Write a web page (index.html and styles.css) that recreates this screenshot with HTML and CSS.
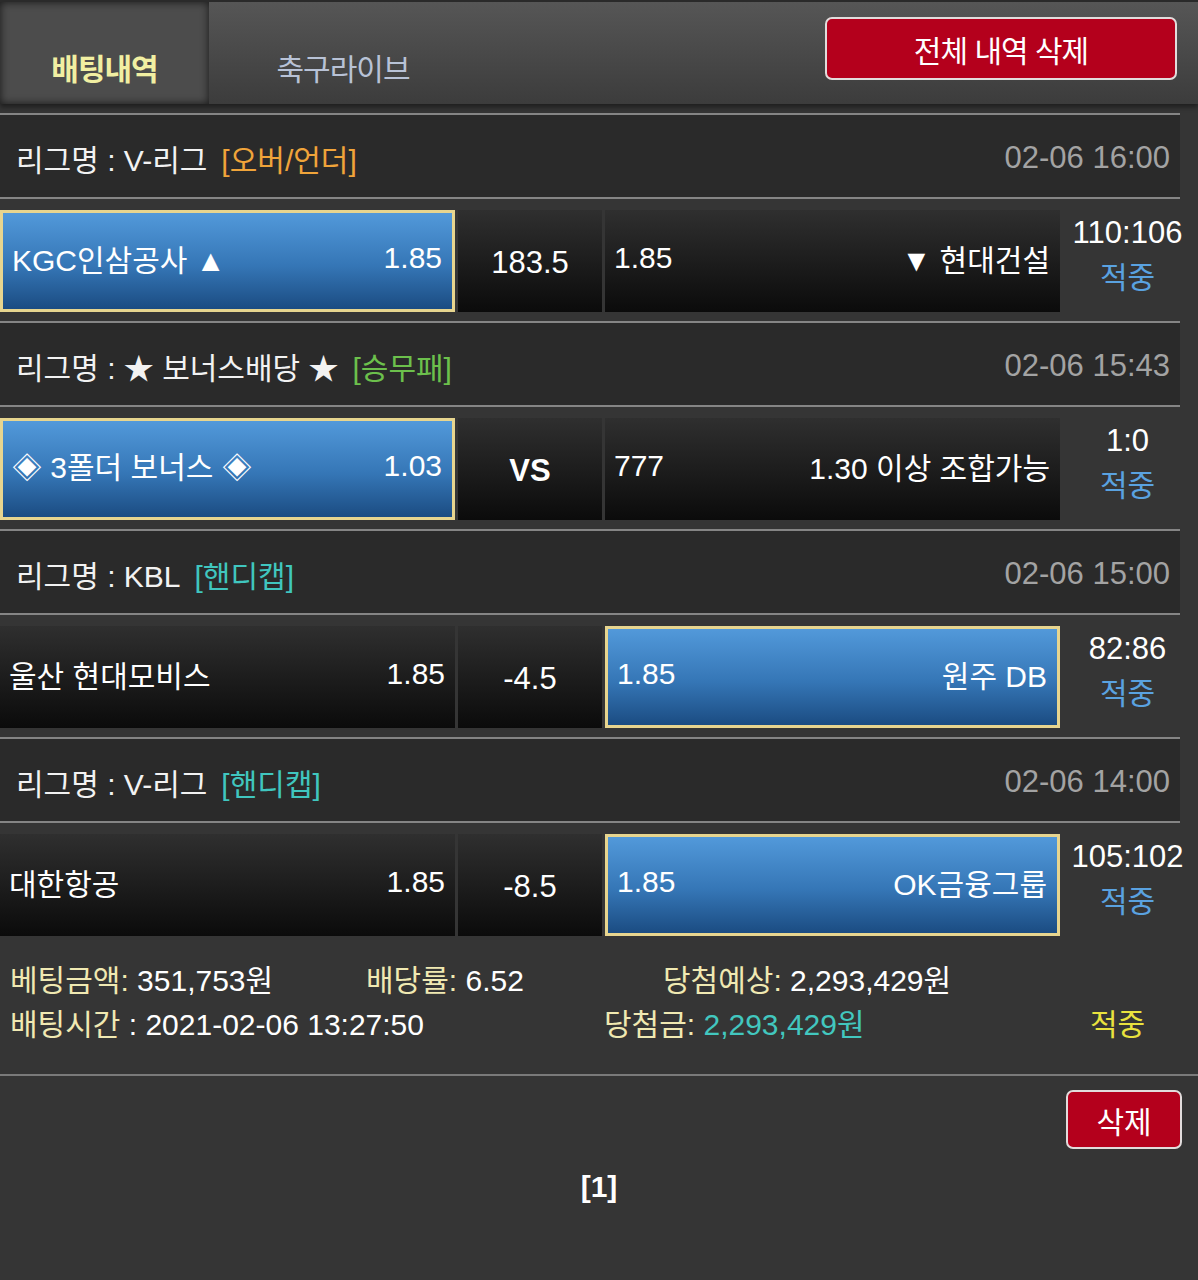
FILE: index.html
```html
<!DOCTYPE html>
<html lang="ko">
<head>
<meta charset="utf-8">
<title>배팅내역</title>
<link rel="stylesheet" href="styles.css">
</head>
<body>
<div class="page">
  <header class="topbar">
    <div class="tab active">배팅내역</div>
    <div class="tab">축구라이브</div>
    <button class="btn-red btn-all">전체 내역 삭제</button>
  </header>

  <main class="list">
    <section class="game">
      <div class="league"><span class="lname">리그명 : V-리그</span><span class="tag orange">[오버/언더]</span><span class="time">02-06 16:00</span></div>
      <div class="match">
        <div class="cell side sel"><span>KGC인삼공사 ▲</span><span>1.85</span></div>
        <div class="cell mid">183.5</div>
        <div class="cell side"><span>1.85</span><span>▼ 현대건설</span></div>
        <div class="score"><div>110:106</div><div class="hit">적중</div></div>
      </div>
    </section>

    <section class="game">
      <div class="league"><span class="lname">리그명 : ★ 보너스배당 ★</span><span class="tag green">[승무패]</span><span class="time">02-06 15:43</span></div>
      <div class="match">
        <div class="cell side sel"><span>◈ 3폴더 보너스 ◈</span><span>1.03</span></div>
        <div class="cell mid vs">VS</div>
        <div class="cell side"><span>777</span><span>1.30 이상 조합가능</span></div>
        <div class="score"><div>1:0</div><div class="hit">적중</div></div>
      </div>
    </section>

    <section class="game">
      <div class="league"><span class="lname">리그명 : KBL</span><span class="tag teal">[핸디캡]</span><span class="time">02-06 15:00</span></div>
      <div class="match">
        <div class="cell side"><span>울산 현대모비스</span><span>1.85</span></div>
        <div class="cell mid">-4.5</div>
        <div class="cell side sel"><span>1.85</span><span>원주 DB</span></div>
        <div class="score"><div>82:86</div><div class="hit">적중</div></div>
      </div>
    </section>

    <section class="game">
      <div class="league"><span class="lname">리그명 : V-리그</span><span class="tag teal">[핸디캡]</span><span class="time">02-06 14:00</span></div>
      <div class="match">
        <div class="cell side"><span>대한항공</span><span>1.85</span></div>
        <div class="cell mid">-8.5</div>
        <div class="cell side sel"><span>1.85</span><span>OK금융그룹</span></div>
        <div class="score"><div>105:102</div><div class="hit">적중</div></div>
      </div>
    </section>

    <section class="summary">
      <div class="sline">
        <div class="s1"><span class="lbl">베팅금액:</span> 351,753원</div>
        <div class="s2"><span class="lbl">배당률:</span> 6.52</div>
        <div><span class="lbl">당첨예상:</span> 2,293,429원</div>
      </div>
      <div class="sline">
        <div class="s3"><span class="lbl">배팅시간</span> : 2021-02-06 13:27:50</div>
        <div class="s4"><span class="lbl">당첨금:</span> <span class="win">2,293,429원</span></div>
        <div class="final">적중</div>
      </div>
    </section>
  </main>

  <footer class="foot">
    <div class="foot-actions"><button class="btn-red btn-del">삭제</button></div>
    <div class="pager">[1]</div>
  </footer>
</div>
</body>
</html>
```

FILE: styles.css
```css
* { box-sizing: border-box; }

html, body {
  margin: 0;
  padding: 0;
  background: #353535;
}

body {
  font-family: "Liberation Sans", "Noto Sans CJK KR", sans-serif;
  font-size: 30px;
  color: #ffffff;
}

.page {
  width: 1198px;
  min-height: 1280px;
  background: #353535;
}

/* top bar */
.topbar {
  height: 104px;
  display: flex;
  align-items: flex-start;
  background: linear-gradient(#565656, #3c3c3c);
  border-top: 2px solid #2a2a2a;
  box-shadow: 0 3px 5px rgba(0, 0, 0, 0.45);
  position: relative;
  z-index: 1;
}

.tab {
  height: 102px;
  display: flex;
  align-items: center;
  justify-content: center;
  padding-top: 27px;
  letter-spacing: -1px;
}

.tab.active {
  width: 209px;
  background: #4c4c4c;
  box-shadow: inset 0 0 8px rgba(0, 0, 0, 0.7);
  color: #f1efa2;
  font-weight: bold;
}

.tab:not(.active) {
  width: 268px;
  color: #b8c2d6;
}

.btn-red {
  font-family: "Liberation Sans", "Noto Sans CJK KR", sans-serif;
  font-size: 30px;
  color: #ffffff;
  background: #b4001c;
  border: 2px solid #e2dcdc;
  border-radius: 7px;
  cursor: pointer;
  padding: 0;
}

.btn-all {
  margin: 15px 21px 0 auto;
  width: 352px;
  height: 63px;
  letter-spacing: -1px;
}

/* list */
.list {
  padding-top: 9px;
}

.league {
  margin-right: 18px;
  height: 86px;
  border-top: 2px solid #858585;
  border-bottom: 2px solid #858585;
  background: #2a2a2a;
  display: flex;
  align-items: center;
  padding: 4px 10px 0 16px;
  color: #f2f2f2;
}

.tag { margin-left: 14px; }
.orange { color: #f0a43a; }
.green { color: #6cc04c; }
.teal { color: #40c6bf; }

.time {
  margin-left: auto;
  color: #a3a3a3;
  font-size: 31px;
}

.match {
  display: grid;
  grid-template-columns: 455px 144px 455px 1fr;
  column-gap: 3px;
  height: 102px;
  margin: 11px 0 9px;
  font-size: 31px;
}

.cell {
  display: flex;
  align-items: center;
  background: linear-gradient(#2f2f2f, #0b0b0b);
}

.side {
  justify-content: space-between;
  padding: 0 10px 6px 9px;
}

.side.sel {
  background: linear-gradient(#5299da, #3576b6 55%, #1b4c82);
  border: 3px solid #e7d58f;
  padding: 0 10px 6px 9px;
}

.side span { font-size: 30px; }
.side span:only-child, .side span:last-child, .side span:first-child { font-size: 30px; }

.mid {
  justify-content: center;
  padding-top: 4px;
}

.mid.vs {
  font-weight: bold;
}

.score {
  display: flex;
  flex-direction: column;
  align-items: center;
  justify-content: center;
  line-height: 45px;
  padding: 0 6px 12px 0;
}

.hit { color: #5aa2e0; font-size: 30px; }

/* summary */
.summary {
  padding: 14px 10px 27px;
  border-bottom: 2px solid #7a7a7a;
}

.sline {
  display: flex;
  line-height: 44px;
}

.lbl { color: #f0e9b2; }
.s1 { width: 356px; }
.s2 { width: 297px; }
.s3 { width: 594px; }
.s4 { width: 486px; }
.win { color: #42c7bf; }
.final { color: #e9e23e; }

/* footer */
.foot {
  padding-top: 14px;
}

.foot-actions {
  display: flex;
  justify-content: flex-end;
  padding-right: 16px;
}

.btn-del {
  width: 116px;
  height: 59px;
}

.pager {
  margin-top: 16px;
  line-height: 44px;
  text-align: center;
  font-weight: bold;
}
```
